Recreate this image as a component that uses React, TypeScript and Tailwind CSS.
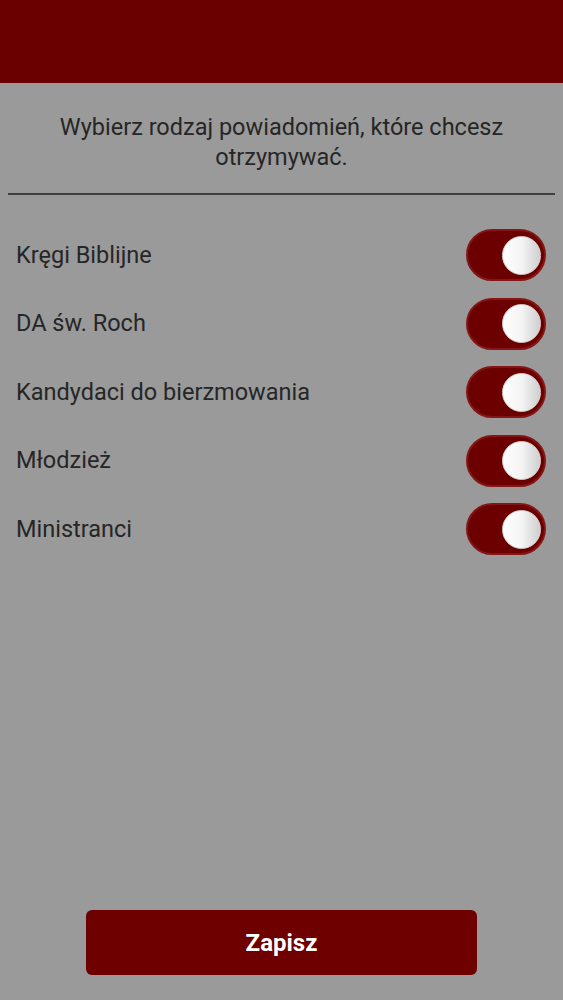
const groups = [
  "Kręgi Biblijne",
  "DA św. Roch",
  "Kandydaci do bierzmowania",
  "Młodzież",
  "Ministranci",
];

function Toggle() {
  return (
    <div className="flex h-[52px] w-[80px] items-center justify-end rounded-full border-2 border-[#861616] bg-[#6c0000] pr-[3px]">
      <div className="h-[39px] w-[39px] rounded-full border border-[#d8d8d8] bg-gradient-to-r from-white via-[#f4f4f4] to-[#cfcfcf]" />
    </div>
  );
}

export default function App() {
  return (
    <div
      className="flex h-[1000px] w-full flex-col bg-[#9a9a9b]"
      style={{ fontFamily: "Roboto, 'Liberation Sans', sans-serif" }}
    >
      <header className="h-[83px] bg-[#6b0000]" />

      <p className="px-8 pt-[29px] text-center text-[23.5px] leading-[30px] text-[#262626]">
        Wybierz rodzaj powiadomień, które chcesz otrzymywać.
      </p>

      <div className="mx-2 mt-[21px] h-[2px] bg-[#3f3f3f]" />

      <ul className="mt-[26px] flex flex-col">
        {groups.map((name) => (
          <li
            className="flex h-[68.5px] items-center justify-between pl-4 pr-[17px]"
            key={name}
          >
            <span className="text-[23.5px] text-[#262626]">{name}</span>
            <Toggle />
          </li>
        ))}
      </ul>

      <div className="mt-auto flex justify-center pb-[25px]">
        <button className="h-[65px] w-[391px] rounded-md bg-[#6e0000] text-[24px] font-bold text-white">
          Zapisz
        </button>
      </div>
    </div>
  );
}
